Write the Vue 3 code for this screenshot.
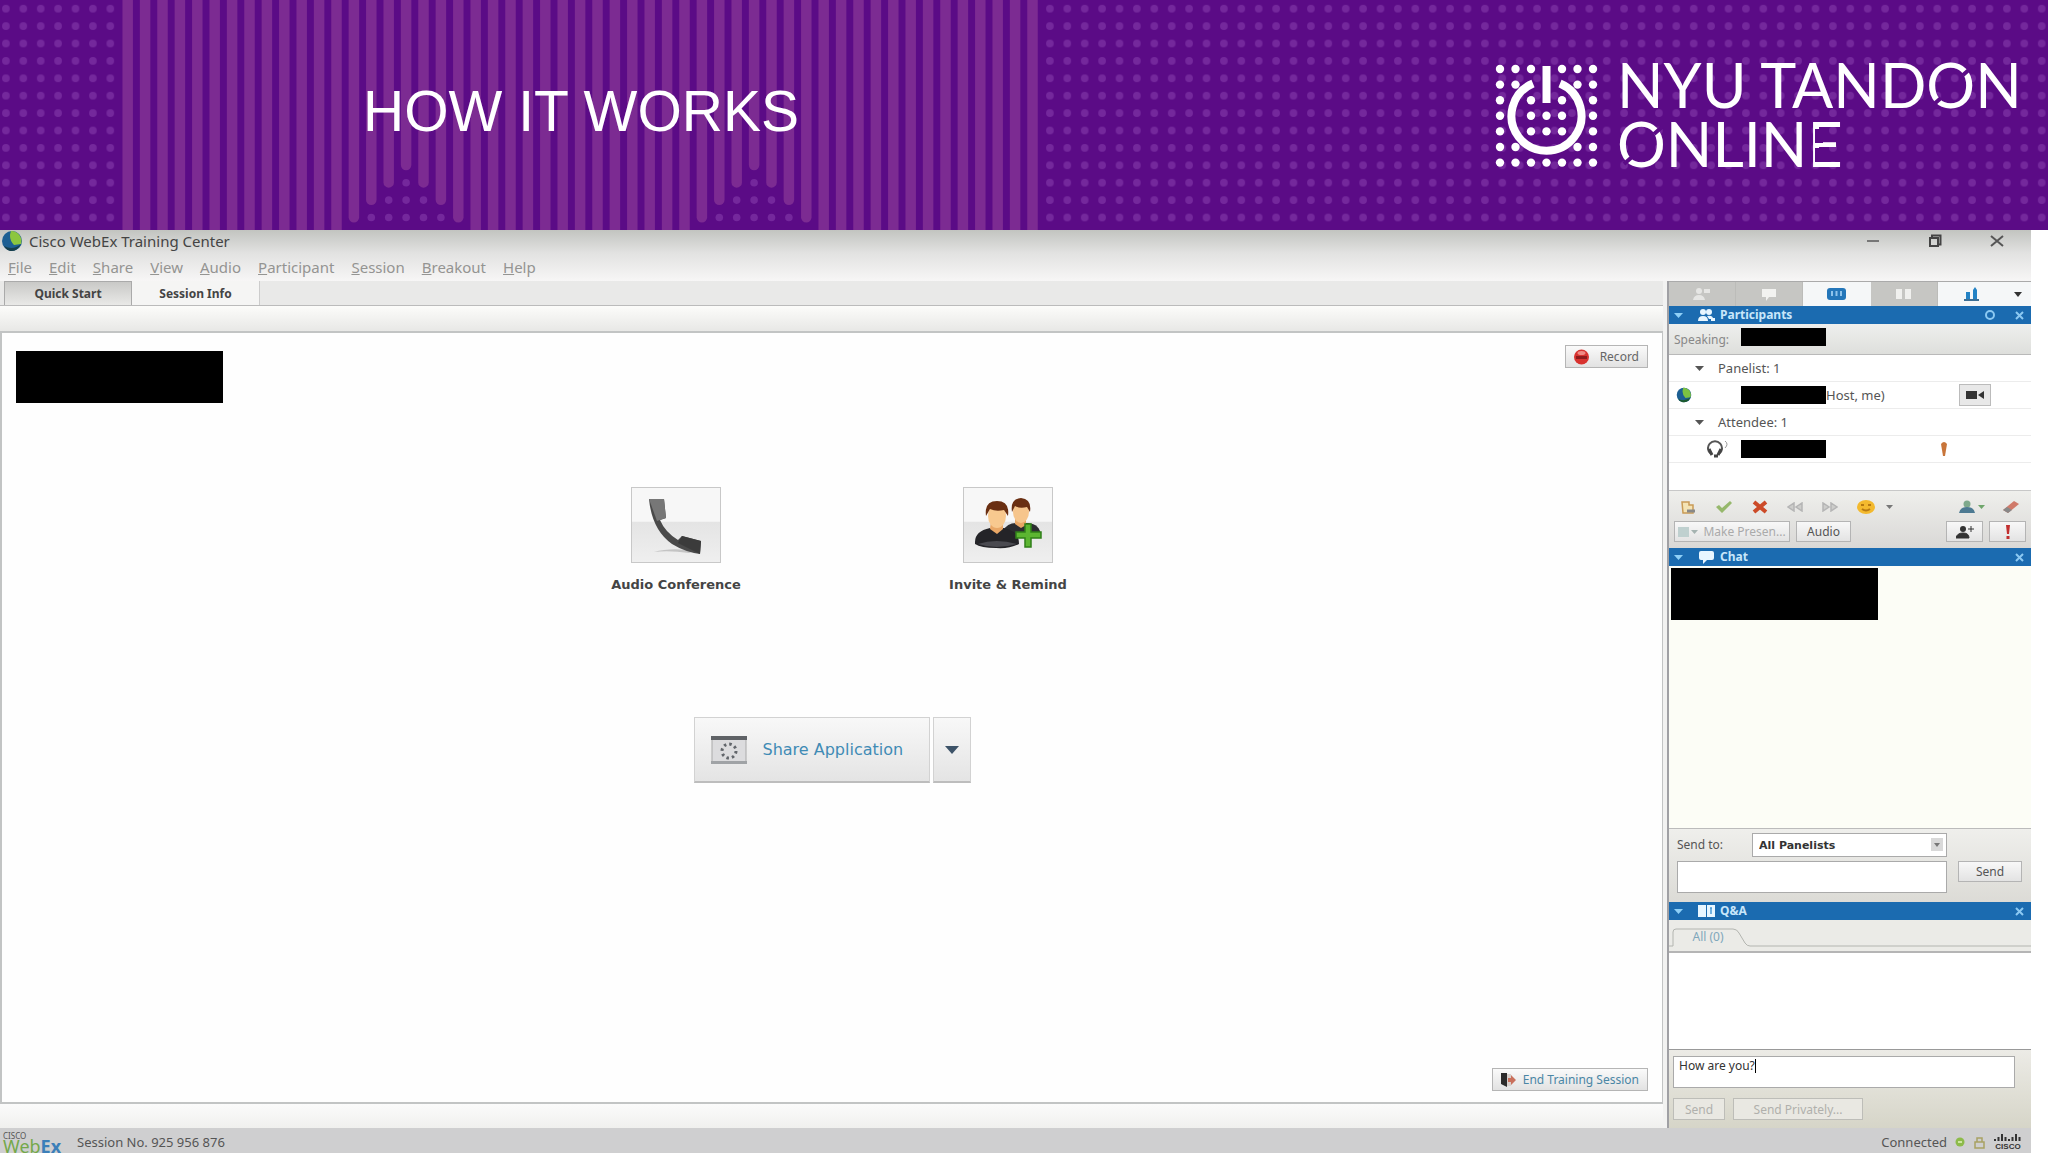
<script setup>
import { ref } from 'vue'

const menus = ['File', 'Edit', 'Share', 'View', 'Audio', 'Participant', 'Session', 'Breakout', 'Help']
const activeTab = ref('Quick Start')
const tabs = ['Quick Start', 'Session Info']
const recipient = ref('All Panelists')
const chatText = ref('')
const question = ref('How are you?')

// banner pattern: grid of dots, some columns are merged into stripes
const pitch = 17.4
const colX = (i) => 5.9 + i * pitch
const rowY = (j) => 8.7 + j * pitch
const stripes = []
const notchDots = []
for (let i = 7; i < 60; i++) {
  const d = Math.min(Math.abs(i - 23), Math.abs(i - 43))
  stripes.push({ x: colX(i), end: d < 4 ? 165 + d * pitch : 240 })
  for (let j = 10 + d; j < 13; j++) {
    notchDots.push({ x: colX(i), y: rowY(j) })
  }
}

// logo dots, leaving out the ones under the power symbol
const logoDots = []
for (let r = 0; r < 7; r++) {
  for (let c = 0; c < 7; c++) {
    const edge = r === 0 || r === 6 || c === 0 || c === 6
    const inner = r >= 2 && r <= 4 && c >= 2 && c <= 4
    const corner = (r === 1 || r === 5) && (c === 1 || c === 5)
    const bar = c === 3 && r < 3
    if ((edge || inner || corner) && !bar) {
      logoDots.push({ x: 5 + c * 15.5, y: 5 + r * 15.6 })
    }
  }
}
</script>

<template>
  <div class="page">
    <header class="banner">
      <svg class="pattern" width="100%" height="100%" aria-hidden="true">
        <defs>
          <pattern id="dots" x="-2.8" y="0" width="17.4" height="17.4" patternUnits="userSpaceOnUse">
            <circle cx="8.7" cy="8.7" r="3.8" fill="#74289c" />
          </pattern>
        </defs>
        <rect width="119" height="100%" fill="url(#dots)" />
        <rect x="1041" width="100%" height="100%" fill="url(#dots)" />
        <line
          v-for="s in stripes"
          :key="s.x"
          :x1="s.x"
          :x2="s.x"
          y1="-10"
          :y2="s.end"
          stroke="#7c2b92"
          stroke-width="10.5"
          stroke-linecap="round"
        />
        <circle v-for="(d, i) in notchDots" :key="i" :cx="d.x" :cy="d.y" r="3.8" fill="#74289c" />
      </svg>
      <h1>HOW IT WORKS</h1>
      <svg class="logo" width="526" height="108" viewBox="0 0 526 108">
        <circle v-for="(d, i) in logoDots" :key="i" :cx="d.x" :cy="d.y" r="4.2" fill="#fff" />
        <path d="M38 19.500A35 35 0 1 0 65 19.500" fill="none" stroke="#fff" stroke-width="8" />
        <path d="M51.500 2V39" stroke="#fff" stroke-width="8" />
        <text class="logo-text" x="122" y="44">NYU TANDON</text>
        <text class="logo-text" x="122" y="103">ONLINE</text>
        <!-- breaks in the letter strokes -->
        <path d="M468 11L476 4M438 41L446 34M159 70L167 63M129 100L137 93" stroke="#5b0b86" stroke-width="4" />
        <path d="M320 65H328V79H320ZM320 84H328V98H320Z" fill="#5b0b86" />
      </svg>
    </header>

    <div class="window">
      <div class="chrome">
        <div class="title-bar">
          <svg width="22" height="22" viewBox="0 0 22 22">
            <circle cx="11" cy="11" r="10" fill="#1d5f93" />
            <path d="M10 1A10 10 0 0 1 20 14L13 15Q7 9 10 1Z" fill="#8cc63f" />
            <path d="M3 16Q12 21 20 14Q16 22 9 21Q5 20 3 16Z" fill="#173f4c" />
          </svg>
          <span class="title">Cisco WebEx Training Center</span>
          <div class="win-buttons">
            <button aria-label="Minimize">
              <svg width="14" height="14" viewBox="0 0 14 14"><path d="M1 7H13" stroke="#777" stroke-width="2" /></svg>
            </button>
            <button aria-label="Restore">
              <svg width="14" height="14" viewBox="0 0 14 14">
                <path d="M4 3V1.500H12.500V10.500H10" fill="none" stroke="#444" stroke-width="2" />
                <rect x="2" y="4" width="8" height="8" fill="none" stroke="#444" stroke-width="2" />
              </svg>
            </button>
            <button aria-label="Close">
              <svg width="14" height="14" viewBox="0 0 14 14"><path d="M1 2L13 12M13 2L1 12" stroke="#555" stroke-width="2" /></svg>
            </button>
          </div>
        </div>
        <nav class="menu-bar">
          <button v-for="m in menus" :key="m"><u>{{ m[0] }}</u>{{ m.slice(1) }}</button>
        </nav>
      </div>

      <div class="body">
        <section class="main">
          <div class="tabs">
            <button v-for="t in tabs" :key="t" :class="{ active: t === activeTab }" @click="activeTab = t">{{ t }}</button>
          </div>
          <div class="tab-shade"></div>
          <div class="stage">
            <div class="stage-top">
              <span class="redacted large"></span>
              <button class="small-btn">
                <svg width="17" height="16" viewBox="0 0 17 16">
                  <circle cx="8.500" cy="8" r="7.500" fill="#d8322f" />
                  <path d="M3 7H14V10H3Z" fill="#8e1b1c" />
                  <ellipse cx="8.500" cy="4" rx="4" ry="2" fill="#f08a84" />
                </svg>
                Record
              </button>
            </div>

            <div class="launchers">
              <div class="launcher">
                <button aria-labelledby="audio-label">
                  <svg width="62" height="62" viewBox="0 0 62 62">
                    <path d="M9 58Q26 53 50 57L44 59Q24 56 9 58Z" fill="#c4c4c4" />
                    <path d="M4 5L19 5L21 24L15 26Q20 38 33 46L37 42L56 47L55 60Q40 58 27 50Q7 36 4 5Z" fill="#4a4a4a" />
                    <path d="M4 5L19 5L21 24L12 27Z" fill="#777" />
                    <path d="M37 42L56 47L55 60L33 49Z" fill="#3b3b3b" />
                  </svg>
                </button>
                <span id="audio-label">Audio Conference</span>
              </div>
              <div class="launcher">
                <button aria-labelledby="invite-label">
                  <svg width="68" height="56" viewBox="0 0 68 56">
                    <path d="M29 34Q33 26 42 26L54 26Q66 27 67 39H30Z" fill="#2c2c30" />
                    <path d="M41 20H52V28L47 31L41 27Z" fill="#e9a766" />
                    <ellipse cx="47" cy="15" rx="8" ry="11" fill="#f6c58c" />
                    <path d="M38 15Q36 2 47 1Q58 2 56 15L53 10Q46 12 41 9Z" fill="#6a2f12" />
                    <path d="M1 45Q1 34 16 31H30Q45 34 45 47Q35 52 22 51Q7 51 1 47Z" fill="#242428" />
                    <path d="M4 47Q22 41 43 47Q22 53 4 47Z" fill="#4a4a50" />
                    <path d="M17 24H29V32L23 37L16 32Z" fill="#e9a766" />
                    <ellipse cx="23" cy="19" rx="9" ry="12" fill="#f8c98f" />
                    <path d="M12 19Q10 4 23 4Q36 4 34 19L30 13Q22 15 16 12Z" fill="#6a2f12" />
                    <path d="M51 27H57V35H67V41H57V50H51V41H42V35H51Z" fill="#5cb531" stroke="#2f7f18" stroke-width="1.500" />
                  </svg>
                </button>
                <span id="invite-label">Invite &amp; Remind</span>
              </div>
            </div>

            <div class="share">
              <button class="share-main">
                <svg width="36" height="28" viewBox="0 0 36 28">
                  <rect x="1" y="1" width="34" height="25" fill="#dcdcde" stroke="#aaa" />
                  <rect width="36" height="4" fill="#5f6266" />
                  <rect y="25" width="36" height="3" fill="#a0a3a6" />
                  <circle cx="18" cy="15" r="7" fill="none" stroke="#62666b" stroke-width="3" stroke-dasharray="2.500 3" />
                </svg>
                Share Application
              </button>
              <button class="share-more" aria-label="More share options">
                <svg width="14" height="8" viewBox="0 0 14 8"><path d="M0 0H14L7 8Z" fill="#3d5368" /></svg>
              </button>
            </div>

            <div class="stage-bottom">
              <button class="small-btn link">
                <svg width="16" height="16" viewBox="0 0 16 16">
                  <path d="M1 1H7V15L1 12Z" fill="#2b2b2b" />
                  <path d="M7 2H11V14H7Z" fill="#d8d0cc" />
                  <path d="M8 6H11V3L16 8L11 13V10H8Z" fill="#c9705c" />
                </svg>
                End Training Session
              </button>
            </div>
          </div>
          <div class="main-foot"></div>
        </section>

        <aside class="side">
          <div class="panel-switch">
            <button aria-label="Participants">
              <svg width="18" height="14" viewBox="0 0 18 14"><circle cx="6" cy="4" r="3" fill="#e6e6e4" /><path d="M0 13Q1 8 6 8T12 13ZM11 2H17V6H11Z" fill="#e6e6e4" /></svg>
            </button>
            <button aria-label="Chat">
              <svg width="16" height="14" viewBox="0 0 16 14"><path d="M1 2H15V10H8L5 14V10H1Z" fill="#f2f2f0" /></svg>
            </button>
            <button class="on" aria-label="Recorder">
              <svg width="19" height="13" viewBox="0 0 19 13"><rect width="19" height="12" rx="3" fill="#2376b9" /><path d="M5 3V8M9.500 3V8M14 3V8" stroke="#8fc4ec" stroke-width="2" /></svg>
            </button>
            <button aria-label="Q&amp;A">
              <svg width="17" height="12" viewBox="0 0 17 12"><path d="M1 1H7V11H1ZM10 1H16V11H10Z" fill="#f0f0ee" /></svg>
            </button>
            <button class="on" aria-label="Polling">
              <svg width="15" height="14" viewBox="0 0 15 14"><path d="M2 5H6V13H2ZM9 3L11 0L13 3V13H9Z" fill="#2382c4" /><path d="M0 13H15" stroke="#3c6f95" stroke-width="2" /></svg>
            </button>
            <button class="on more" aria-label="More panels">
              <svg width="8" height="5" viewBox="0 0 8 5"><path d="M0 0H8L4 5Z" fill="#333" /></svg>
            </button>
          </div>

          <h2 class="panel-head">
            <svg class="tri" width="9" height="5" viewBox="0 0 9 5"><path d="M0 0H9L4.500 5Z" fill="#8fd0f7" /></svg>
            <svg width="17" height="14" viewBox="0 0 17 14">
              <circle cx="5" cy="4" r="3" fill="#e8f6ff" /><circle cx="11" cy="4" r="3" fill="#e8f6ff" />
              <path d="M0 13Q0 8 5 8T10 13ZM9 8Q15 7 15 11H11ZM13 10H17V13H13Z" fill="#e8f6ff" />
            </svg>
            <span>Participants</span>
            <button aria-label="Panel options">
              <svg width="12" height="12" viewBox="0 0 12 12"><circle cx="6" cy="6" r="4" fill="none" stroke="#8cc9f2" stroke-width="2" /></svg>
            </button>
            <button aria-label="Close Participants">
              <svg width="9" height="9" viewBox="0 0 9 9"><path d="M1 1L8 8M8 1L1 8" stroke="#8cc9f2" stroke-width="2" /></svg>
            </button>
          </h2>
          <div class="speaking">
            <span>Speaking:</span><i class="redacted"></i>
          </div>
          <ul class="people">
            <li class="group">
              <svg width="9" height="5" viewBox="0 0 9 5"><path d="M0 0H9L4.500 5Z" fill="#555" /></svg>Panelist: 1
            </li>
            <li class="person">
              <span class="status">
                <svg width="16" height="16" viewBox="0 0 22 22">
                  <circle cx="11" cy="11" r="10" fill="#1d5f93" />
                  <path d="M10 1A10 10 0 0 1 20 14L13 15Q7 9 10 1Z" fill="#7cc242" />
                  <path d="M3 16Q12 21 20 14Q16 22 9 21Q5 20 3 16Z" fill="#1c5a2c" />
                </svg>
              </span>
              <i class="redacted"></i>
              <span>Host, me)</span>
              <button class="cam" aria-label="Camera">
                <svg width="18" height="10" viewBox="0 0 18 10"><path d="M0 1H11V9H0ZM12 5L18 1V9Z" fill="#333" /></svg>
              </button>
            </li>
            <li class="group">
              <svg width="9" height="5" viewBox="0 0 9 5"><path d="M0 0H9L4.500 5Z" fill="#555" /></svg>Attendee: 1
            </li>
            <li class="person">
              <span class="status right">
                <svg width="23" height="18" viewBox="0 0 23 18">
                  <path d="M4 14A7 7 0 1 1 12 14" fill="none" stroke="#555" stroke-width="2" />
                  <path d="M2 9L5 15M14 9L11 15M11 16H7" stroke="#444" stroke-width="3" />
                  <path d="M18 1Q22 4 18 8" fill="none" stroke="#999" stroke-width="1" />
                </svg>
              </span>
              <i class="redacted"></i>
              <svg class="alert" width="6" height="14" viewBox="0 0 6 14"><path d="M0 2Q3 -2 6 2L4 14H2Z" fill="#c8753a" /></svg>
            </li>
          </ul>
          <div class="toolbar">
            <div class="tools">
              <button aria-label="Raise hand">
                <svg width="16" height="14" viewBox="0 0 16 14"><path d="M2 2H9V5H13V13H3Z" fill="#f4e3b4" stroke="#c99b55" stroke-width="1.500" /><path d="M7 11H15" stroke="#888" stroke-width="3" /></svg>
              </button>
              <button aria-label="Yes">
                <svg width="18" height="14" viewBox="0 0 18 14"><path d="M1 7L4 5L7 8L15 1L17 3L7 13Z" fill="#96b86c" /></svg>
              </button>
              <button aria-label="No">
                <svg width="16" height="14" viewBox="0 0 16 14"><path d="M2 2L14 12M14 2L2 12" stroke="#cc4a28" stroke-width="4" /></svg>
              </button>
              <button aria-label="Go slower">
                <svg width="16" height="10" viewBox="0 0 16 10"><path d="M7 1V9L1 5ZM15 1V9L9 5Z" fill="#cdcdcb" stroke="#b5b5b5" stroke-width="1.500" /></svg>
              </button>
              <button aria-label="Go faster">
                <svg width="16" height="10" viewBox="0 0 16 10"><path d="M1 1V9L7 5ZM9 1V9L15 5Z" fill="#cdcdcb" stroke="#b5b5b5" stroke-width="1.500" /></svg>
              </button>
              <button aria-label="Emoticons">
                <svg width="18" height="14" viewBox="0 0 18 14"><ellipse cx="9" cy="7" rx="9" ry="7" fill="#f3b92e" /><path d="M4 5H7M11 5H14M5 9Q9 12 13 9" stroke="#b77a12" stroke-width="2" fill="none" /></svg>
              </button>
              <svg class="dd" width="7" height="4" viewBox="0 0 7 4"><path d="M0 0H7L3.500 4Z" fill="#777" /></svg>
              <span class="grow"></span>
              <button aria-label="Feedback">
                <svg width="16" height="14" viewBox="0 0 16 14"><circle cx="8" cy="4" r="3.500" fill="#7fa98c" /><path d="M0 13Q1 7 8 7T16 13Z" fill="#4d7a92" /></svg>
              </button>
              <svg class="dd near" width="7" height="4" viewBox="0 0 7 4"><path d="M0 0H7L3.500 4Z" fill="#6fa66b" /></svg>
              <button class="eraser" aria-label="Clear">
                <svg width="18" height="14" viewBox="0 0 18 14"><path d="M1 10L12 1L17 4L6 13Z" fill="#d07a6a" /><path d="M1 10L5 7L10 10L6 13Z" fill="#888" /></svg>
              </button>
            </div>
            <div class="actions">
              <button class="present" disabled>
                <svg width="20" height="10" viewBox="0 0 20 10"><rect width="11" height="10" fill="#bfd0cf" /><path d="M13 3H20L16.500 7Z" fill="#a5b3b1" /></svg>
                Make Presen...
              </button>
              <button>Audio</button>
              <span class="grow"></span>
              <button class="sq" aria-label="Invite">
                <svg width="18" height="14" viewBox="0 0 18 14"><circle cx="7" cy="4" r="3" fill="#333" /><path d="M0 13Q1 8 7 8T13 13ZM12 4H18M15 1V7" fill="#333" stroke="#333" /></svg>
              </button>
              <button class="sq" aria-label="Alert">
                <svg width="6" height="14" viewBox="0 0 6 14"><path d="M1 0H5L4 9H2ZM1.500 11H4.500V14H1.500Z" fill="#c22f2f" /></svg>
              </button>
            </div>
          </div>

          <h2 class="panel-head">
            <svg class="tri" width="9" height="5" viewBox="0 0 9 5"><path d="M0 0H9L4.500 5Z" fill="#8fd0f7" /></svg>
            <svg width="17" height="14" viewBox="0 0 17 14"><path d="M3 1H14Q16 1 16 3V8Q16 10 14 10H9L5 14V10H3Q1 10 1 8V3Q1 1 3 1Z" fill="#e8f6ff" /></svg>
            <span>Chat</span>
            <button aria-label="Close Chat">
              <svg width="9" height="9" viewBox="0 0 9 9"><path d="M1 1L8 8M8 1L1 8" stroke="#8cc9f2" stroke-width="2" /></svg>
            </button>
          </h2>
          <div class="chat-log"><span class="redacted large"></span></div>
          <div class="chat-form">
            <label for="sendto">Send to:</label>
            <div class="select-wrap">
              <select id="sendto" v-model="recipient">
                <option>All Panelists</option>
              </select>
              <svg width="12" height="13" viewBox="0 0 12 13"><rect width="12" height="13" fill="#d9d9d9" /><path d="M3 5H9L6 9Z" fill="#777" /></svg>
            </div>
            <textarea v-model="chatText" aria-label="Chat message"></textarea>
            <button>Send</button>
          </div>

          <h2 class="panel-head">
            <svg class="tri" width="9" height="5" viewBox="0 0 9 5"><path d="M0 0H9L4.500 5Z" fill="#8fd0f7" /></svg>
            <svg width="17" height="12" viewBox="0 0 17 12"><path d="M0 0H8V12H0ZM9 0H17V12H9Z" fill="#e8f6ff" /><path d="M12 3H14M13 3V9" stroke="#4b9bd6" stroke-width="1.500" /></svg>
            <span>Q&amp;A</span>
            <button aria-label="Close Q&amp;A">
              <svg width="9" height="9" viewBox="0 0 9 9"><path d="M1 1L8 8M8 1L1 8" stroke="#8cc9f2" stroke-width="2" /></svg>
            </button>
          </h2>
          <div class="qa-tabs">
            <svg width="100%" height="20" aria-hidden="true"><path d="M0 18H4V4Q4 1 7 1H64Q68 1 70 5L76 15Q78 18 81 18H2000" fill="none" stroke="#b3b5b0" /></svg>
            <button>All (0)</button>
          </div>
          <div class="qa-log"></div>
          <div class="qa-form">
            <div class="question">
              <textarea v-model="question" aria-label="Question"></textarea>
              <span class="caret"></span>
            </div>
            <div class="qa-actions">
              <button disabled>Send</button>
              <button class="wide" disabled>Send Privately...</button>
            </div>
          </div>
        </aside>
      </div>

      <footer class="status-bar">
        <span class="webex"><small>CISCO</small><b>Web<em>Ex</em></b></span>
        <span>Session No. 925 956 876</span>
        <span class="grow"></span>
        <span>Connected</span>
        <svg width="10" height="10" viewBox="0 0 10 10"><circle cx="5" cy="5" r="4.500" fill="#8dbb4a" /><path d="M3 5H7" stroke="#cfe6a0" stroke-width="2" /></svg>
        <svg width="13" height="13" viewBox="0 0 13 13"><path d="M4 6V2H9V6M2 6H11V12H2Z" fill="none" stroke="#a9a263" stroke-width="1.500" /></svg>
        <svg width="28" height="18" viewBox="0 0 28 18">
          <path d="M1 6V8M4.500 4V8M8 1V8M11.500 4V8M15 6V8M18.500 4V8M22 1V8M25.500 4V8" stroke="#333" stroke-width="2" />
          <text x="14" y="16" text-anchor="middle" class="cisco">CISCO</text>
        </svg>
      </footer>
    </div>
  </div>
</template>

<style>
body {
  background: #fff;
}
</style>

<style scoped>
* {
  box-sizing: border-box;
}

.page {
  display: flex;
  flex-direction: column;
  min-height: 100vh;
  font-family: "Noto Sans", "Liberation Sans", sans-serif;
  font-size: 12px;
  color: #555;
}

button {
  padding: 0;
  border: none;
  background: none;
  font: inherit;
  color: inherit;
}

svg {
  display: block;
  flex: none;
}

.grow {
  flex: 1;
}

.redacted {
  display: block;
  width: 85px;
  height: 18px;
  background: #000;
}

.redacted.large {
  width: 207px;
  height: 52px;
}

/* banner */
.banner {
  position: relative;
  display: flex;
  align-items: center;
  justify-content: space-between;
  height: 230px;
  padding: 0 27px 0 363px;
  background: #5b0b86;
}

.pattern {
  position: absolute;
  inset: 0;
}

h1 {
  position: relative;
  margin: 0;
  padding-bottom: 8px;
  font-family: "Liberation Sans", Arial, sans-serif;
  font-size: 57px;
  font-weight: 400;
  line-height: 64px;
  color: #fff;
}

.logo {
  position: relative;
  margin-top: 6px;
  overflow: visible;
}

.logo-text {
  font-family: Lato, sans-serif;
  font-size: 61px;
  font-weight: 400;
  fill: #fff;
}

/* window frame */
.window {
  flex: 1;
  display: flex;
  flex-direction: column;
  margin-right: 17px;
  background: #f2f2f1;
}

.chrome {
  background: linear-gradient(#c2c4c0, #e2e2e1 45%, #f7f6f6);
}

.title-bar {
  display: flex;
  align-items: center;
  gap: 6px;
  height: 24px;
  padding: 0 27px 2px 1px;
}

.title {
  flex: 1;
  font-size: 15px;
  line-height: 22px;
  color: #444;
}

.win-buttons {
  display: flex;
  gap: 48px;
}

.menu-bar {
  display: flex;
  gap: 17px;
  height: 27px;
  padding-left: 8px;
  font-size: 15px;
  line-height: 27px;
  color: #949492;
}

.body {
  flex: 1;
  display: flex;
}

.main {
  flex: 1;
  display: flex;
  flex-direction: column;
  padding-right: 4px;
}

.tabs {
  display: flex;
  height: 25px;
  padding-left: 4px;
  border-bottom: 1px solid #bbb;
  background: #e9e9e8;
}

.tabs button {
  width: 128px;
  border-right: 1px solid #ccc;
  background: #f5f5f4;
  font-size: 12px;
  font-weight: 700;
  color: #444;
}

.tabs .active {
  border: 1px solid #aaa;
  border-bottom: none;
  background: linear-gradient(#c9c9c7, #e9e9e7);
}

.tab-shade {
  height: 25px;
  background: linear-gradient(#fcfcfa, #e8e8e6);
}

.stage {
  flex: 1;
  display: flex;
  flex-direction: column;
  padding: 14px 14px 11px;
  border: 2px solid #c2c4c4;
  border-right-width: 1px;
  background: #fefefe;
}

.stage-top {
  display: flex;
  justify-content: space-between;
  align-items: flex-start;
  padding-top: 4px;
}

.small-btn {
  display: flex;
  align-items: center;
  gap: 10px;
  height: 23px;
  padding: 0 8px 0 7px;
  border: 1px solid #b5b5b5;
  background: linear-gradient(#fafafa, #e2e2e2);
  font-size: 12px;
  color: #666;
}

.stage-top .small-btn {
  margin-top: -6px;
}

.small-btn.link {
  gap: 7px;
  color: #4a86a5;
}

.launchers {
  display: grid;
  grid-template-columns: 332px 332px;
  justify-content: center;
  margin: 84px 0 0 20px;
}

.launcher {
  display: flex;
  flex-direction: column;
  align-items: center;
  gap: 13px;
  font-family: "DejaVu Sans", sans-serif;
  font-size: 13px;
  font-weight: 700;
  line-height: 18px;
  color: #444;
}

.launcher button {
  display: grid;
  place-items: center;
  width: 90px;
  height: 76px;
  border: 1px solid #c8c8c8;
  background: linear-gradient(#f7f7f7 45%, #e4e4e4 46%, #efefef);
}

.share {
  display: flex;
  justify-content: center;
  gap: 3px;
  margin-top: 123px;
}

.share button {
  height: 66px;
  border: 1px solid #d2d2d2;
  border-bottom: 2px solid #bdbdbd;
  background: linear-gradient(#f8f8f8, #e4e4e4);
}

.share .share-main {
  display: flex;
  align-items: center;
  gap: 16px;
  width: 236px;
  padding-left: 16px;
  font-family: "DejaVu Sans", sans-serif;
  font-size: 16px;
  color: #3f8bb5;
}

.share .share-more {
  display: grid;
  place-items: center;
  width: 38px;
}

.stage-bottom {
  flex: 1;
  display: flex;
  align-items: flex-end;
  justify-content: flex-end;
}

.main-foot {
  height: 24px;
  background: linear-gradient(#fbfbfb, #f0f0ee);
}

/* side panels */
.side {
  display: flex;
  flex-direction: column;
  width: 364px;
  border-left: 2px solid #a0a0a4;
  background: #fff;
}

.panel-switch {
  display: grid;
  grid-template-columns: repeat(5, 1fr) 26px;
  height: 25px;
  border-top: 1px solid #aaa;
  background: #c6c6c3;
}

.panel-switch button {
  display: grid;
  place-items: center;
  border-right: 1px solid #bcbcb9;
}

.panel-switch .on {
  border-right: none;
  background: #f5f7f8;
}

.panel-head {
  display: flex;
  align-items: center;
  height: 18px;
  margin: 0;
  padding: 0 7px 0 5px;
  background: #1b6bb0;
  font-size: 12px;
  font-weight: 700;
  line-height: 18px;
  color: #c8e6fa;
}

.panel-head .tri {
  margin-right: 15px;
}

.panel-head span {
  flex: 1;
  padding-left: 5px;
}

.panel-head button + button {
  margin-left: 19px;
}

.speaking {
  display: flex;
  align-items: center;
  height: 31px;
  padding-left: 5px;
  border-bottom: 1px solid #b9b9b9;
  background: linear-gradient(#eeefed, #dedfdc);
  color: #888;
}

.speaking span {
  width: 67px;
}

.speaking .redacted {
  margin-bottom: 4px;
}

.people {
  height: 135px;
  margin: 0;
  padding: 0;
  list-style: none;
  font-size: 13px;
}

.people li {
  display: flex;
  align-items: center;
  height: 27px;
  border-bottom: 1px solid #ececec;
}

.group {
  gap: 14px;
  padding-left: 26px;
}

.person {
  padding: 0 40px 0 7px;
}

.status {
  width: 65px;
}

.status.right {
  padding-left: 31px;
}

.cam {
  display: grid;
  place-items: center;
  width: 32px;
  height: 22px;
  margin-left: auto;
  border: 1px solid #bbb;
  background: #e8e8e8;
}

.alert {
  margin: 0 44px 0 auto;
}

.toolbar {
  height: 58px;
  padding: 7px 5px 6px;
  border-top: 1px solid #c8c8c8;
  background: linear-gradient(#efefec, #d9d8d6);
}

.tools {
  display: flex;
  align-items: center;
  gap: 19px;
  height: 18px;
  padding: 0 6px;
}

.tools .dd {
  margin-left: -8px;
}

.tools .near {
  margin-left: -16px;
}

.tools .eraser {
  margin-left: -2px;
}

.actions {
  display: flex;
  gap: 6px;
  margin-top: 5px;
}

.actions button {
  display: flex;
  align-items: center;
  justify-content: center;
  gap: 5px;
  width: 55px;
  height: 21px;
  border: 1px solid #b4b4b4;
  background: linear-gradient(#f8f8f8, #e3e3e3);
}

.actions .present {
  width: 116px;
  color: #aaa;
}

.actions .sq {
  width: 37px;
}

.chat-log {
  flex: 1;
  padding: 2px;
  background: #fcfdf6;
}

.chat-form {
  display: grid;
  grid-template-columns: 75px 1fr 64px;
  grid-template-rows: 24px 32px;
  row-gap: 4px;
  padding: 4px 9px 9px 8px;
  border-top: 1px solid #bbb;
  background: linear-gradient(#efefec, #dcdbd6);
}

.chat-form label {
  line-height: 24px;
}

.select-wrap {
  position: relative;
  margin-right: 11px;
}

.select-wrap svg {
  position: absolute;
  top: 5px;
  right: 4px;
  pointer-events: none;
}

select {
  width: 100%;
  height: 24px;
  padding: 0 6px;
  border: 1px solid #aaa;
  border-radius: 0;
  appearance: none;
  background: #fff;
  font-family: "DejaVu Sans", sans-serif;
  font-size: 11px;
  font-weight: 700;
  color: #333;
}

textarea {
  display: block;
  width: 100%;
  height: 32px;
  padding: 0 5px;
  border: 1px solid #aaa;
  resize: none;
  background: #fff;
  font: inherit;
  line-height: 18px;
  color: #333;
  outline: none;
  overflow: hidden;
}

.chat-form textarea {
  grid-column: 1 / 3;
  width: auto;
  margin-right: 11px;
}

.chat-form button {
  height: 21px;
  border: 1px solid #b4b4b4;
  background: linear-gradient(#f8f8f8, #e3e3e3);
}

.qa-tabs {
  position: relative;
  height: 33px;
  padding-top: 8px;
  border-bottom: 2px solid #b5b5b5;
  background: #ebebe7;
}

.qa-tabs button {
  position: absolute;
  top: 8px;
  left: 4px;
  width: 70px;
  height: 18px;
  line-height: 18px;
  color: #7fa7bb;
}

.qa-log {
  height: 96px;
}

.qa-form {
  height: 79px;
  padding: 6px 16px 8px 4px;
  border-top: 1px solid #999;
  background: linear-gradient(#ecebe6, #d6d5c8);
}

.question {
  position: relative;
}

.caret {
  position: absolute;
  top: 3px;
  left: 82px;
  width: 1px;
  height: 14px;
  background: #000;
}

.qa-actions {
  display: flex;
  gap: 8px;
  margin-top: 10px;
}

.qa-actions button {
  width: 52px;
  height: 22px;
  border: 1px solid #bdbdb8;
  background: #e9e8e2;
  color: #b0b0ac;
}

.qa-actions .wide {
  width: 130px;
}

/* status bar */
.status-bar {
  display: flex;
  align-items: center;
  gap: 8px;
  height: 25px;
  padding: 3px 9px 0 3px;
  background: #cfcfd0;
  font-size: 13px;
}

.webex {
  display: flex;
  flex-direction: column;
  width: 66px;
}

.webex small {
  font-size: 8px;
  line-height: 7px;
}

.webex b {
  font-size: 18px;
  font-weight: 400;
  line-height: 14px;
  color: #74a84a;
}

.webex em {
  font-style: normal;
  font-weight: 700;
  color: #3c7fb9;
}

.cisco {
  font-family: "Liberation Sans", sans-serif;
  font-size: 8px;
  font-weight: 700;
  fill: #333;
}
</style>
